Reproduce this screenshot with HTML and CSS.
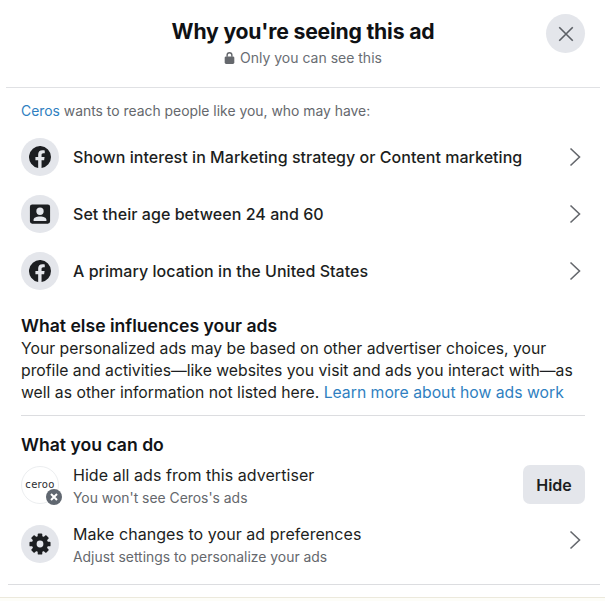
FILE: index.html
```html
<!DOCTYPE html>
<html lang="en">
<head>
    <meta charset="UTF-8">
    <title>Why you're seeing this ad</title>
    <link rel="stylesheet" href="styles.css">
</head>
<body>
    <div class="dialog">
        <header class="header">
            <h1 class="title">Why you're seeing this ad</h1>
            <p class="subtitle">
                <svg class="lock" viewBox="1 0 10 13.500"><path d="M2.800 6V4.200a3.200 3.200 0 0 1 6.400 0V6H7.700V4.200a1.700 1.700 0 0 0-3.400 0V6z"/><rect x="1" y="5.600" width="10" height="7.900" rx="1.500"/></svg>
                Only you can see this
            </p>
            <button class="close" aria-label="Close">
                <svg viewBox="0 0 20 20"><path d="M2.500 2.500l15 15M17.500 2.500l-15 15"/></svg>
            </button>
        </header>

        <section class="reasons">
            <p class="intro"><a href="#">Ceros</a> wants to reach people like you, who may have:</p>
            <div class="row">
                <span class="icon"><svg viewBox="0 0 24 24"><path d="M24 12a12 12 0 1 0-14 11.900v-8.400H7V12h3V9.400c0-3 1.800-4.700 4.500-4.700 1.300 0 2.700.2 2.700.2v3h-1.500c-1.500 0-2 .9-2 1.900V12h3.300l-.5 3.500h-2.800v8.400A12 12 0 0 0 24 12z"/></svg></span>
                <span class="row-text">Shown interest in Marketing strategy or Content marketing</span>
                <svg class="chevron" viewBox="0 0 12 20"><path d="M1.500 1.500L10.500 10l-9 8.500"/></svg>
            </div>
            <div class="row">
                <span class="icon"><svg viewBox="0 0 24 24"><path fill-rule="evenodd" d="M3.500 1.500h17a2.500 2.500 0 0 1 2.500 2.500v16a2.500 2.500 0 0 1-2.500 2.500h-17A2.500 2.500 0 0 1 1 20V4a2.500 2.500 0 0 1 2.500-2.500zM12 5a4 4 0 1 0 0 8 4 4 0 0 0 0-8zM5 19.500h14v-1.300c0-1.900-2.800-3.400-7-3.400s-7 1.500-7 3.400z"/></svg></span>
                <span class="row-text">Set their age between 24 and 60</span>
                <svg class="chevron" viewBox="0 0 12 20"><path d="M1.500 1.500L10.500 10l-9 8.500"/></svg>
            </div>
            <div class="row">
                <span class="icon"><svg viewBox="0 0 24 24"><path d="M24 12a12 12 0 1 0-14 11.900v-8.400H7V12h3V9.400c0-3 1.800-4.700 4.500-4.700 1.300 0 2.700.2 2.700.2v3h-1.500c-1.500 0-2 .9-2 1.900V12h3.300l-.5 3.500h-2.800v8.400A12 12 0 0 0 24 12z"/></svg></span>
                <span class="row-text">A primary location in the United States</span>
                <svg class="chevron" viewBox="0 0 12 20"><path d="M1.500 1.500L10.500 10l-9 8.500"/></svg>
            </div>
        </section>

        <section class="influences">
            <h2 class="heading">What else influences your ads</h2>
            <p class="body-text">Your personalized ads may be based on other advertiser choices, your profile and activities—like websites you visit and ads you interact with—as well as other information not listed here. <a href="#">Learn more about how ads work</a></p>
        </section>

        <section class="actions">
            <h2 class="heading">What you can do</h2>
            <div class="action">
                <span class="icon icon-logo">
                    <span class="logo-word">ceroo</span>
                    <span class="badge"><svg viewBox="0 0 10 10"><path d="M2 2l6 6M8 2l-6 6"/></svg></span>
                </span>
                <div class="action-text">
                    <div class="action-title">Hide all ads from this advertiser</div>
                    <div class="action-sub">You won't see Ceros's ads</div>
                </div>
                <button class="hide">Hide</button>
            </div>
            <div class="action">
                <span class="icon">
                    <svg class="gear" viewBox="0 0 24 24">
                        <rect x="9.500" y="0.500" width="5" height="23" rx="1"/>
                        <rect x="9.500" y="0.500" width="5" height="23" rx="1" transform="rotate(45 12 12)"/>
                        <rect x="9.500" y="0.500" width="5" height="23" rx="1" transform="rotate(90 12 12)"/>
                        <rect x="9.500" y="0.500" width="5" height="23" rx="1" transform="rotate(135 12 12)"/>
                        <circle cx="12" cy="12" r="8.800"/>
                        <circle class="gear-hole" cx="12" cy="12" r="3.700"/>
                    </svg>
                </span>
                <div class="action-text">
                    <div class="action-title">Make changes to your ad preferences</div>
                    <div class="action-sub">Adjust settings to personalize your ads</div>
                </div>
                <svg class="chevron chevron-raised" viewBox="0 0 12 20"><path d="M1.500 1.500L10.500 10l-9 8.500"/></svg>
            </div>
        </section>
        <div class="bottom-rule"></div>
    </div>
    <div class="page-edge"></div>
</body>
</html>
```

FILE: styles.css
```css
* {
    box-sizing: border-box;
}

body {
    margin: 0;
    height: 601px;
    overflow: hidden;
    background-color: #fff;
    font-family: Inter, "Liberation Sans", sans-serif;
    color: #1c1e21;
}

a {
    color: #2f7fc1;
    text-decoration: none;
}

.dialog {
    height: 597px;
    padding: 0 5px 0 6px;
}

.header {
    position: relative;
    height: 88px;
    padding-top: 18px;
    border-bottom: 1px solid #e0e1e4;
    text-align: center;
}

.title {
    margin: 0;
    font-size: 21.2px;
    line-height: 27px;
    font-weight: 700;
    color: #0f1114;
    letter-spacing: -0.2px;
}

.subtitle {
    margin: 3px 0 0;
    font-size: 14px;
    line-height: 20px;
    color: #696d73;
}

.lock {
    width: 11px;
    height: 13px;
    margin-right: 1px;
    vertical-align: -1px;
    fill: #65686d;
}

.close {
    position: absolute;
    top: 14px;
    right: 15px;
    width: 39px;
    height: 39px;
    display: flex;
    align-items: center;
    justify-content: center;
    padding: 0;
    border: 0;
    border-radius: 50%;
    background-color: #e4e6eb;
}

.close svg {
    width: 18px;
    height: 18px;
    fill: none;
    stroke: #5b5f65;
    stroke-width: 1.8;
}

.reasons {
    padding: 13px 15px 0;
}

.intro {
    margin: 0 0 7px;
    font-size: 13.9px;
    line-height: 20px;
    color: #65686d;
}

.row {
    display: flex;
    align-items: center;
    height: 57px;
}

.icon {
    position: relative;
    flex: none;
    width: 38px;
    height: 38px;
    margin-right: 14px;
    display: flex;
    align-items: center;
    justify-content: center;
    border-radius: 50%;
    background-color: #e4e6eb;
}

.icon svg {
    width: 22px;
    height: 22px;
    fill: #1c1e21;
}

.icon .gear-hole {
    fill: #e4e6eb;
}

.row-text {
    flex: 1;
    font-size: 16px;
    font-weight: 500;
    letter-spacing: 0.04px;
    color: #1c1e21;
}

.chevron {
    flex: none;
    width: 12px;
    height: 20px;
    margin-right: 4px;
    fill: none;
    stroke: #65686d;
    stroke-width: 1.6;
}

.chevron-raised {
    margin-top: -8px;
}

.influences {
    padding: 14px 15px 11px;
}

.heading {
    margin: 0;
    font-size: 17.6px;
    line-height: 25px;
    font-weight: 600;
    color: #111316;
}

.body-text {
    margin: 0;
    font-size: 15.75px;
    line-height: 22px;
    color: #1c1e21;
}

.actions {
    margin: 0 15px;
    padding-top: 18px;
    border-top: 1px solid #dcdde0;
}

.actions .heading {
    line-height: 22px;
}

.action {
    display: flex;
    align-items: center;
    height: 57px;
    margin-bottom: 2px;
}

.action-text {
    flex: 1;
    margin-top: 4px;
}

.action-title {
    font-size: 16px;
    line-height: 22px;
    letter-spacing: 0.05px;
}

.action-sub {
    margin-top: 1px;
    font-size: 13.9px;
    line-height: 22px;
    color: #65686d;
}

.icon-logo {
    background-color: #fff;
    border: 1px solid #eceef0;
}

.logo-word {
    font-family: "DejaVu Sans", sans-serif;
    font-size: 10px;
    letter-spacing: 0.3px;
    color: #2a2c30;
}

.icon .badge {
    position: absolute;
    right: -4px;
    bottom: -2px;
    width: 16px;
    height: 16px;
    display: flex;
    align-items: center;
    justify-content: center;
    border-radius: 50%;
    background-color: #606770;
}

.badge svg {
    width: 10px;
    height: 10px;
    fill: none;
    stroke: #fff;
    stroke-width: 2;
}

.hide {
    width: 62px;
    height: 39px;
    border: 0;
    border-radius: 7px;
    background-color: #e4e6eb;
    font-family: inherit;
    font-size: 16px;
    font-weight: 600;
    color: #1c1e21;
}

.bottom-rule {
    margin: 12px 0 0 2px;
    border-top: 1px solid #dcdde0;
}

.page-edge {
    height: 4px;
    border-top: 1px solid #ece9dc;
    background-color: #fdfdf8;
}
```
